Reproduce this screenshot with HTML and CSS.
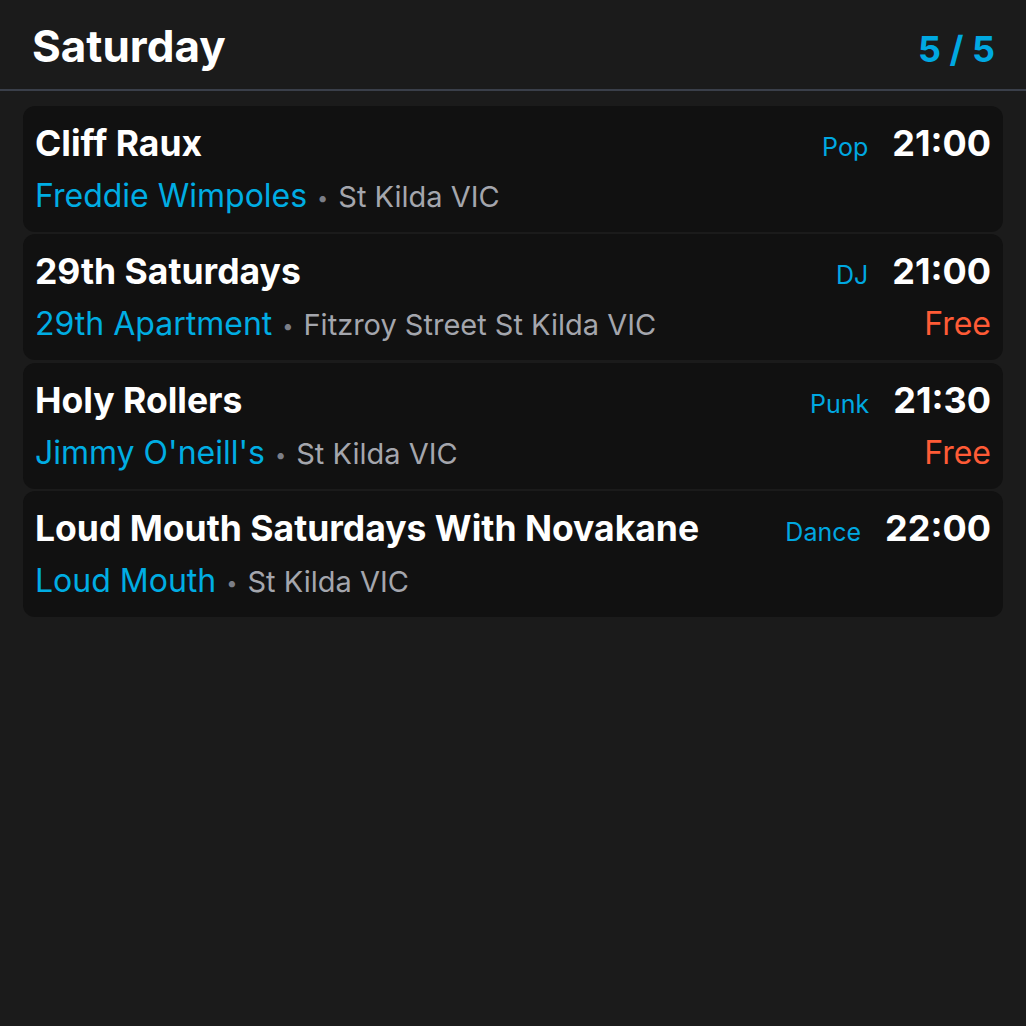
FILE: index.html
```html
<!DOCTYPE html>
<html>
<head>
<meta charset="utf-8">
<link rel="stylesheet" href="styles.css">
</head>
<body>
<div class="app">
  <header class="header">
    <h1 class="day">Saturday</h1>
    <div class="count">5 / 5</div>
  </header>
  <main class="list">
    <div class="card">
      <div class="row">
        <div class="title">Cliff Raux</div>
        <div class="genre">Pop</div>
        <div class="time">21:00</div>
      </div>
      <div class="row">
        <div class="place"><span class="venue">Freddie Wimpoles</span><span class="dot">•</span><span class="loc">St Kilda VIC</span></div>
      </div>
    </div>
    <div class="card">
      <div class="row">
        <div class="title">29th Saturdays</div>
        <div class="genre">DJ</div>
        <div class="time">21:00</div>
      </div>
      <div class="row">
        <div class="place"><span class="venue">29th Apartment</span><span class="dot">•</span><span class="loc">Fitzroy Street St Kilda VIC</span></div>
        <div class="price">Free</div>
      </div>
    </div>
    <div class="card">
      <div class="row">
        <div class="title">Holy Rollers</div>
        <div class="genre">Punk</div>
        <div class="time">21:30</div>
      </div>
      <div class="row">
        <div class="place"><span class="venue">Jimmy O'neill's</span><span class="dot">•</span><span class="loc">St Kilda VIC</span></div>
        <div class="price">Free</div>
      </div>
    </div>
    <div class="card">
      <div class="row">
        <div class="title">Loud Mouth Saturdays With Novakane</div>
        <div class="genre">Dance</div>
        <div class="time">22:00</div>
      </div>
      <div class="row">
        <div class="place"><span class="venue">Loud Mouth</span><span class="dot">•</span><span class="loc">St Kilda VIC</span></div>
      </div>
    </div>
  </main>
</div>
</body>
</html>
```

FILE: styles.css
```css
* { box-sizing: border-box; }
html, body {
  margin: 0;
  padding: 0;
  background: #1b1b1b;
  height: 100%;
}
body {
  font-family: Inter, "Noto Sans", sans-serif;
  color: #fff;
}
.header {
  display: flex;
  align-items: baseline;
  justify-content: space-between;
  height: 91px;
  padding: 19px 31px 0 32px;
  border-bottom: 2px solid #3a3f4a;
}
.day {
  margin: 0;
  font-size: 44px;
  font-weight: 700;
  color: #fff;
}
.count {
  font-size: 36px;
  font-weight: 700;
  color: #00a8e1;
}
.list {
  display: flex;
  flex-direction: column;
  gap: 2.4px;
  padding: 15px 23px 0 23px;
}
.card {
  background: #111111;
  border-radius: 12px;
  padding: 15px 12px 0 12px;
  height: 126px;
  display: flex;
  flex-direction: column;
}
.row {
  display: flex;
  align-items: baseline;
  height: 52px;
}
.row + .row {
  margin-top: 3px;
}
.title {
  flex: 1;
  font-size: 35.5px;
  font-weight: 700;
  color: #fff;
}
.genre {
  font-size: 25px;
  color: #00a8e1;
  margin-right: 24px;
}
.time {
  font-size: 36px;
  font-weight: 700;
  color: #fff;
}
.place {
  flex: 1;
  font-size: 32px;
}
.venue { color: #00ade3; }
.dot {
  color: #7b7e87;
  font-size: 20px;
  margin: 0 10px;
  vertical-align: 2px;
}
.loc { color: #a4a6ad; font-size: 29px; }
.price {
  font-size: 32px;
  color: #ff5b36;
}
```
